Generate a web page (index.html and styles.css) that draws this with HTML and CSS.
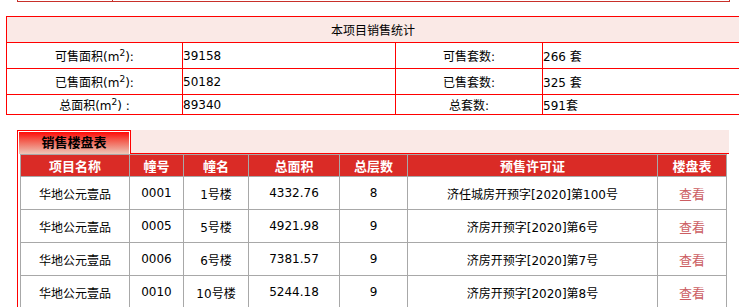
FILE: index.html
```html
<!DOCTYPE html>
<html lang="zh">
<head>
<meta charset="utf-8">
<title>销售统计</title>
<link rel="stylesheet" href="styles.css">
</head>
<body>
<div class="frag"><div class="frag-cell"></div><div class="frag-rest"></div></div>

<table class="stats">
  <colgroup><col class="c1"><col class="c2"><col class="c3"><col class="c4"></colgroup>
  <tr class="stats-head"><td colspan="4">本项目销售统计</td></tr>
  <tr class="r"><td class="lbl">可售面积(m<sup>2</sup>):</td><td>39158</td><td class="lbl">可售套数:</td><td>266 套</td></tr>
  <tr class="r"><td class="lbl">已售面积(m<sup>2</sup>):</td><td>50182</td><td class="lbl">已售套数:</td><td>325 套</td></tr>
  <tr class="r last"><td class="lbl">总面积(m<sup>2</sup>) :</td><td>89340</td><td class="lbl">总套数:</td><td>591套</td></tr>
</table>

<div class="sale-box">
  <div class="tabbar">
    <div class="tab">销售楼盘表</div>
    <div class="strip"></div>
  </div>
  <div class="panel">
    <table class="list">
      <colgroup>
        <col class="w1"><col class="w2"><col class="w3"><col class="w4"><col class="w5"><col class="w6"><col class="w7">
      </colgroup>
      <tr class="list-head"><th>项目名称</th><th>幢号</th><th>幢名</th><th>总面积</th><th>总层数</th><th>预售许可证</th><th>楼盘表</th></tr>
      <tr><td>华地公元壹品</td><td>0001</td><td>1号楼</td><td>4332.76</td><td>8</td><td>济任城房开预字[2020]第100号</td><td><a class="view">查看</a></td></tr>
      <tr><td>华地公元壹品</td><td>0005</td><td>5号楼</td><td>4921.98</td><td>9</td><td>济房开预字[2020]第6号</td><td><a class="view">查看</a></td></tr>
      <tr><td>华地公元壹品</td><td>0006</td><td>6号楼</td><td>7381.57</td><td>9</td><td>济房开预字[2020]第7号</td><td><a class="view">查看</a></td></tr>
      <tr><td>华地公元壹品</td><td>0010</td><td>10号楼</td><td>5244.18</td><td>9</td><td>济房开预字[2020]第8号</td><td><a class="view">查看</a></td></tr>
    </table>
  </div>
</div>
</body>
</html>
```

FILE: styles.css
```css
html, body {
  margin: 0;
  padding: 0;
  background: #fff;
  overflow: hidden;
}
body {
  font-family: "DejaVu Sans", "Noto Sans CJK SC", sans-serif;
  font-size: 12px;
  color: #000;
}

.frag {
  display: flex;
  margin-left: 17px;
  width: 711px;
  height: 1px;
  border: 1px solid #c8302a;
  border-top: none;
}
.frag-cell {
  width: 94px;
  border-right: 1px solid #c8302a;
}
.frag-rest { flex: 1; }

.stats {
  margin: 14px 0 0 6px;
  width: 733px;
  border-collapse: collapse;
  table-layout: fixed;
  border: 1px solid #f00;
}
.stats td {
  border: 1px solid #f00;
  padding: 0;
  white-space: nowrap;
}
.stats .c1 { width: 176px; }
.stats .c2 { width: 213px; }
.stats .c3 { width: 147px; }
.stats .c4 { width: 197px; }
.stats-head td {
  background: #fae9e6;
  text-align: center;
  height: 25px;
}
.stats .r td { height: 25px; }
.stats .r.last td { height: 19px; }
.stats .lbl { text-align: center; }
.stats sup {
  font-size: 9px;
  line-height: 0;
  vertical-align: 5px;
}

.sale-box {
  margin: 15px 0 0 17px;
  width: 712px;
}
.tabbar {
  display: flex;
  height: 24px;
}
.tab {
  box-sizing: border-box;
  width: 114px;
  height: 24px;
  border: 1px solid #f00;
  border-bottom: none;
  box-shadow: inset 1px 1px 0 #fff, inset -1px 0 0 #fff;
  background: linear-gradient(to bottom, #ff0000 0%, #f35a4c 40%, #eec6b8 100%);
  font-family: "DejaVu Sans", "Noto Sans CJK SC", sans-serif;
  font-weight: bold;
  font-size: 13px;
  line-height: 23px;
  text-align: center;
  color: #000;
}
.strip {
  flex: 1;
  box-sizing: border-box;
  height: 24px;
  background: #fae9e6;
  border-bottom: 1px solid #f00;
}
.panel {
  border-left: 1px solid #f00;
  padding-left: 2px;
}

.list {
  width: 706px;
  border-collapse: collapse;
  table-layout: fixed;
  border: 1px solid #a8a8a8;
}
.list .w1 { width: 109px; }
.list .w2 { width: 54px; }
.list .w3 { width: 65px; }
.list .w4 { width: 91px; }
.list .w5 { width: 68px; }
.list .w6 { width: 250px; }
.list .w7 { width: 69px; }
.list th, .list td {
  border: 1px solid #a8a8a8;
  padding: 0;
  text-align: center;
  white-space: nowrap;
}
.list th {
  background: #da2b26;
  color: #fff;
  font-weight: bold;
  font-size: 13px;
  height: 21px;
}
.list td {
  height: 32px;
  color: #000;
}
.view {
  color: #cc5d62;
  font-size: 13px;
  font-family: "Noto Sans CJK SC", sans-serif;
  cursor: pointer;
}
```
